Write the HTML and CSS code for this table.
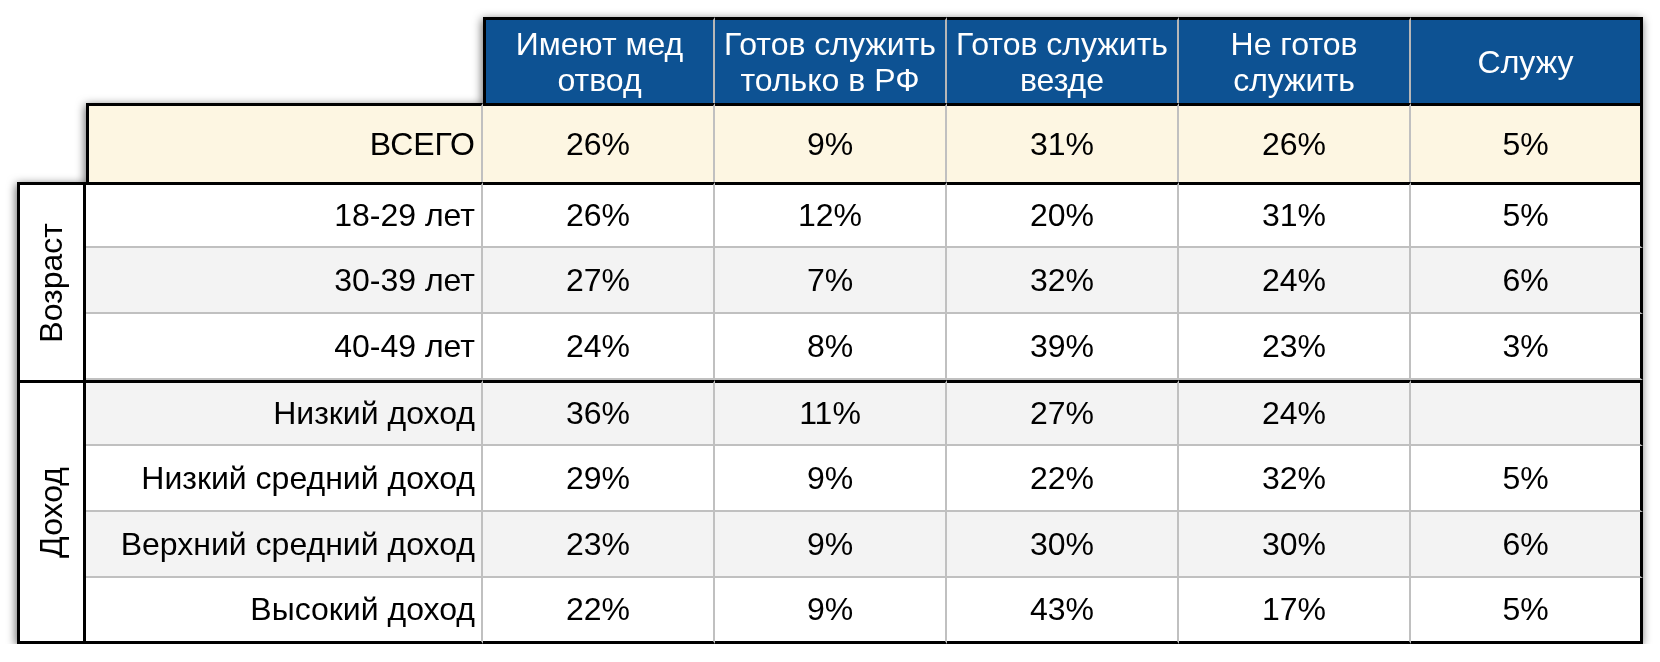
FILE: index.html
```html
<!DOCTYPE html>
<html lang="ru">
<head>
<meta charset="utf-8">
<title>Таблица</title>
<link rel="stylesheet" href="styles.css">
</head>
<body>
<div class="sheet">
  <div class="blank span2"></div>
  <div class="hd first">Имеют мед<br>отвод</div>
  <div class="hd">Готов служить<br>только в РФ</div>
  <div class="hd">Готов служить<br>везде</div>
  <div class="hd">Не готов<br>служить</div>
  <div class="hd last">Служу</div>

  <div class="blank"></div>
  <div class="lbl total tl">ВСЕГО</div>
  <div class="val total">26%</div>
  <div class="val total">9%</div>
  <div class="val total">31%</div>
  <div class="val total">26%</div>
  <div class="val total last">5%</div>

  <div class="grp g3"><span>Возраст</span></div>
  <div class="lbl top">18-29 лет</div>
  <div class="val top">26%</div>
  <div class="val top">12%</div>
  <div class="val top">20%</div>
  <div class="val top">31%</div>
  <div class="val top last">5%</div>

  <div class="lbl alt">30-39 лет</div>
  <div class="val alt">27%</div>
  <div class="val alt">7%</div>
  <div class="val alt">32%</div>
  <div class="val alt">24%</div>
  <div class="val alt last">6%</div>

  <div class="lbl">40-49 лет</div>
  <div class="val">24%</div>
  <div class="val">8%</div>
  <div class="val">39%</div>
  <div class="val">23%</div>
  <div class="val last">3%</div>

  <div class="grp g4"><span>Доход</span></div>
  <div class="lbl alt top">Низкий доход</div>
  <div class="val alt top">36%</div>
  <div class="val alt top">11%</div>
  <div class="val alt top">27%</div>
  <div class="val alt top">24%</div>
  <div class="val alt top last"></div>

  <div class="lbl">Низкий средний доход</div>
  <div class="val">29%</div>
  <div class="val">9%</div>
  <div class="val">22%</div>
  <div class="val">32%</div>
  <div class="val last">5%</div>

  <div class="lbl alt">Верхний средний доход</div>
  <div class="val alt">23%</div>
  <div class="val alt">9%</div>
  <div class="val alt">30%</div>
  <div class="val alt">30%</div>
  <div class="val alt last">6%</div>

  <div class="lbl bot">Высокий доход</div>
  <div class="val bot">22%</div>
  <div class="val bot">9%</div>
  <div class="val bot">43%</div>
  <div class="val bot">17%</div>
  <div class="val bot last">5%</div>
</div>
</body>
</html>
```
FILE: styles.css
```css
html, body {
  margin: 0;
  padding: 0;
  background: #ffffff;
}

body {
  font-family: "Liberation Sans", Arial, sans-serif;
  color: #000000;
}

.sheet {
  display: grid;
  grid-template-columns: 69px 397px repeat(5, 232px);
  grid-template-rows: 86px 79px repeat(7, 66px);
  margin: 17px 0 0 17px;
  width: max-content;
  filter: drop-shadow(-1px 2px 5px rgba(0, 0, 0, 0.6));
  font-size: 32px;
}

.sheet > div {
  box-sizing: border-box;
  display: flex;
  align-items: center;
}

.blank {
  background: transparent;
}

.span2 {
  grid-column: span 2;
}

.hd {
  background: #0d5293;
  color: #ffffff;
  justify-content: center;
  text-align: center;
  line-height: 36px;
  border-top: 3px solid #000000;
  border-right: 2px solid #b7b7b7;
}

.hd.first {
  border-left: 3px solid #000000;
}

.hd.last {
  border-right: 3px solid #000000;
}

.lbl {
  justify-content: flex-end;
  padding-right: 6px;
  background: #ffffff;
  border-right: 2px solid #c0c0c0;
  border-bottom: 2px solid #c0c0c0;
  white-space: nowrap;
}

.val {
  justify-content: center;
  background: #ffffff;
  border-right: 2px solid #c0c0c0;
  border-bottom: 2px solid #c0c0c0;
}

.val.last {
  border-right: 3px solid #000000;
}

.total {
  background: #fdf6e2;
  border-top: 3px solid #000000;
  border-bottom: 0;
}

.tl {
  border-left: 3px solid #000000;
}

.alt {
  background: #f3f3f3;
}

.top {
  border-top: 3px solid #000000;
}

.bot {
  border-bottom: 3px solid #000000;
}

.grp {
  background: #ffffff;
  justify-content: center;
  border-left: 3px solid #000000;
  border-right: 3px solid #000000;
  border-top: 3px solid #000000;
}

.g3 {
  grid-row: span 3;
}

.g4 {
  grid-row: span 4;
  border-bottom: 3px solid #000000;
}

.grp span {
  display: block;
  writing-mode: vertical-rl;
  transform: rotate(180deg);
  white-space: nowrap;
}
```
